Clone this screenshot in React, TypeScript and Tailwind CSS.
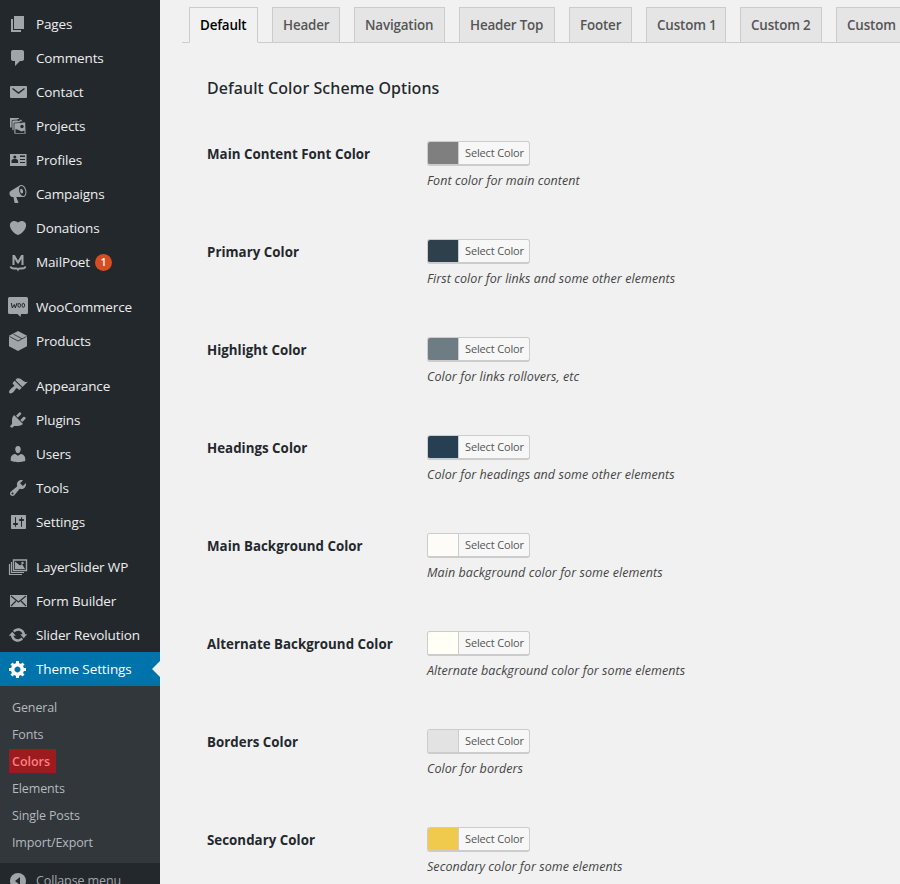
import type { ReactNode } from "react";

const icons: Record<string, ReactNode> = {
  pages: <path d="M6 15V2h10v13H6zm-1 1h8v2H3V5h2v11z" />,
  comments: <path d="M5 2h9c1.1 0 2 .9 2 2v7c0 1.1-.9 2-2 2h-2l-5 5v-5H5c-1.1 0-2-.9-2-2V4c0-1.1.9-2 2-2z" />,
  contact: (
    <>
      <rect x="2" y="4" width="17" height="12" rx="1" />
      <path d="M4.500 6.500l6 4.500 6-4.500" fill="none" stroke="#23282d" strokeWidth="1.500" />
    </>
  ),
  projects: (
    <>
      <path d="M2 2h9v9.500H2z" />
      <path d="M4 4.500l10-1 1 11H4z" stroke="#23282d" strokeWidth=".7" />
      <path d="M6 7l11.500-1L18 18H6z" stroke="#23282d" strokeWidth=".7" />
      <path d="M7.500 13l3 1 3 1.500 3-1V17h-9z" fill="#23282d" />
      <circle cx="14" cy="10.500" r="1.700" fill="#23282d" />
      <circle cx="10.500" cy="4" r="1.100" fill="#23282d" />
      <circle cx="13" cy="6.200" r="1" fill="#23282d" />
    </>
  ),
  profiles: (
    <>
      <rect x="2" y="4" width="16.500" height="12" />
      <g fill="#23282d">
        <circle cx="6.800" cy="7" r="1.500" />
        <path d="M3.500 13v-2c0-1.500 1.500-2 3.300-2s3.300.5 3.300 2v2z" />
        <path d="M12 5.500h5v1.500h-5zM12 9h5v1h-5zM12 12h5v1h-5z" />
      </g>
    </>
  ),
  campaigns: (
    <path d="M18.15 5.94c.46 1.62.38 3.22-.02 4.48-.42 1.28-1.26 2.18-2.3 2.48-.16.06-.26.06-.4.06-.06.02-.12.02-.18.02-.06.02-.14.02-.22.02h-6.8l2.22 5.5c.02.14-.06.26-.14.34-.08.1-.24.16-.34.16H6.95c-.1 0-.26-.06-.34-.16-.08-.08-.16-.2-.14-.34l-1-5.5H4.25l-.02-.02c-.5.06-1.08-.18-1.54-.62s-.88-1.08-1.06-1.88c-.24-.8-.2-1.56-.02-2.2.18-.62.58-1.08 1.06-1.3l.02-.02 9-5.4c.1-.06.18-.1.24-.16.06-.04.14-.08.24-.12.16-.08.28-.12.5-.18 1.04-.3 2.24.1 3.22.98s1.84 2.24 2.26 3.86zm-2.58 5.98h-.02c.4-.1.74-.34 1.04-.7.58-.7.86-1.76.86-3.04 0-.64-.1-1.3-.28-1.98-.34-1.36-1.02-2.5-1.78-3.24s-1.68-1.1-2.46-.88c-.82.22-1.4.96-1.7 2-.32 1.04-.28 2.36.06 3.72.38 1.36 1 2.5 1.8 3.24.78.74 1.62 1.1 2.48.88zm-2.54-7.08c.22-.04.42-.02.62.04.38.16.76.48 1.02 1s.42 1.2.42 1.78c0 .3-.04.56-.12.8-.18.48-.44.84-.86.94-.34.1-.8-.06-1.14-.4s-.64-.86-.78-1.500c-.18-.62-.12-1.24.02-1.72s.48-.84.82-.94z" />
  ),
  donations: (
    <path d="M10 17.12c3.33-1.4 5.74-3.79 7.04-6.21 1.28-2.41 1.46-4.81.32-6.25-1.03-1.29-2.37-1.78-3.73-1.74s-2.68.63-3.63 1.46c-.95-.83-2.27-1.42-3.63-1.46s-2.7.45-3.73 1.74c-1.14 1.44-.96 3.84.34 6.25 1.28 2.42 3.69 4.81 7.02 6.21z" />
  ),
  mailpoet: (
    <>
      <path d="M4.500 13V3h2.300L10 8.500 13.200 3h2.300v10h-2V6.800L10.700 11.500H9.300L6.500 6.800V13z" />
      <path d="M2.500 14.500c.5 1.800 1.800 2 3.500 2h2.500c.8 0 1.200.3 1.500 1 .3-.7.700-1 1.500-1H14c1.700 0 3-.2 3.500-2" fill="none" stroke="currentColor" strokeWidth="1.800" />
    </>
  ),
  woo: (
    <>
      <path d="M1.500 0h17A1.500 1.500 0 0 1 20 1.500v14a1.500 1.500 0 0 1-1.500 1.500H13l-.500 3-3-3h-8A1.500 1.500 0 0 1 0 15.500v-14A1.500 1.500 0 0 1 1.500 0z" />
      <g fill="none" stroke="#23282d" strokeWidth="1">
        <path d="M3.300 6l1 5L6.300 7.500 7.300 11l1.700-5" />
        <ellipse cx="11.200" cy="8.300" rx="1.300" ry="2" />
        <ellipse cx="15.300" cy="8.300" rx="1.300" ry="2" />
      </g>
    </>
  ),
  products: (
    <>
      <path d="M10 0l9 4.700v10.600L10 20l-9-4.700V4.700z" />
      <path d="M1.500 5.500L10 10 18.500 5.500M5.500 3.200L14 7.700" fill="none" stroke="#23282d" strokeWidth=".8" />
    </>
  ),
  appearance: (
    <path d="M14.48 11.06L7.41 3.99l1.5-1.5c.5-.56 2.3-.47 3.51.32 1.21.8 1.43 1.28 2.91 2.1 1.18.64 2.45 1.26 4.45.85zm-.71.71L6.7 4.7 4.93 6.47c-.39.39-.39 1.02 0 1.41l1.06 1.06c.39.39.39 1.03 0 1.42-.6.6-1.43 1.11-2.21 1.69-.35.26-.7.53-1.01.84C1.43 14.23.4 16.08 1.4 17.07c.99 1 2.84-.03 4.18-1.36.31-.31.58-.66.85-1.02.57-.78 1.08-1.61 1.69-2.21.39-.39 1.02-.39 1.41 0l1.06 1.06c.39.39 1.02.39 1.41 0z" />
  ),
  plugins: (
    <path d="M13.11 4.36L9.87 7.6 8 5.73l3.24-3.24c.35-.34 1.05-.2 1.56.32.52.51.66 1.21.31 1.55zm-8 1.77l.91-1.12 9.01 9.01-1.19.84c-.71.71-2.63 1.16-3.82 1.16H6.14L4.9 17.26c-.59.59-1.54.59-2.12 0-.59-.58-.59-1.53 0-2.12l1.24-1.24v-3.88c0-1.13.4-3.19 1.09-3.89zm7.26 3.97l3.24-3.24c.34-.35 1.04-.21 1.55.31.52.51.66 1.21.31 1.55l-3.24 3.25z" />
  ),
  users: (
    <path d="M10 9.25c-2.27 0-2.73-3.44-2.73-3.44C7 4.02 7.82 2 9.97 2c2.16 0 2.98 2.02 2.71 3.81 0 0-.41 3.44-2.68 3.44zm0 2.57L12.72 10c2.39 0 4.52 2.33 4.52 4.53v2.49s-3.65 1.13-7.24 1.13c-3.65 0-7.24-1.13-7.24-1.13v-2.49c0-2.25 1.94-4.48 4.47-4.48z" />
  ),
  tools: (
    <path d="M16.68 9.77c-1.34 1.34-3.3 1.67-4.95.99l-5.41 6.52c-.99.99-2.59.99-3.58 0s-.99-2.59 0-3.57l6.52-5.42c-.68-1.65-.35-3.61.99-4.95 1.28-1.28 3.12-1.62 4.72-1.06l-2.89 2.89 2.82 2.82 2.86-2.87c.53 1.58.18 3.39-1.08 4.65zM3.81 16.21c.4.39 1.04.39 1.43 0 .4-.4.4-1.04 0-1.43-.39-.4-1.03-.4-1.43 0-.39.39-.39 1.03 0 1.43z" />
  ),
  settings: (
    <path d="M18 16V4c0-.55-.45-1-1-1H4c-.55 0-1 .45-1 1v12c0 .55.45 1 1 1h13c.55 0 1-.45 1-1zM8 11h1c.55 0 1 .45 1 1s-.45 1-1 1H8v1.5c0 .28-.22.5-.5.5s-.5-.22-.5-.5V13H6c-.55 0-1-.45-1-1s.45-1 1-1h1V5.500c0-.28.22-.5.5-.5s.5.22.5.5V11zm5-2h-1c-.55 0-1-.45-1-1s.45-1 1-1h1V5.500c0-.28.22-.5.5-.5s.5.22.5.5V7h1c.55 0 1 .45 1 1s-.45 1-1 1h-1v5.500c0 .28-.22.5-.5.5s-.5-.22-.5-.5V9z" />
  ),
  layers: (
    <>
      <path d="M1.500 7v10.500H14M3.500 5v10.500H16" fill="none" stroke="currentColor" strokeWidth="1.200" />
      <path d="M5.500 3h13v10.500h-13z" fill="none" stroke="currentColor" strokeWidth="1.400" />
      <path d="M7 4.500l5 4 2-1.500 3 5H7z" />
      <circle cx="14.500" cy="6" r="1.200" />
    </>
  ),
  form: (
    <>
      <rect x="2" y="4" width="17" height="12" />
      <path d="M3 5l7.500 6L18 5M3 15l5-5M18 15l-5-5" fill="none" stroke="#23282d" strokeWidth="1.100" />
    </>
  ),
  revolution: (
    <path d="M10.2 3.280c3.530 0 6.430 2.610 6.920 6h2.080l-3.500 4-3.500-4h2.320c-.45-1.970-2.210-3.450-4.320-3.450-1.450 0-2.730.71-3.540 1.780L4.950 5.660C6.230 4.200 8.110 3.280 10.200 3.280zm-.4 13.440c-3.520 0-6.430-2.610-6.920-6H.8l3.500-4c1.170 1.330 2.330 2.670 3.500 4H5.480c.45 1.970 2.210 3.450 4.320 3.450 1.450 0 2.730-.71 3.540-1.780l1.710 1.950c-1.280 1.460-3.150 2.380-5.250 2.380z" />
  ),
  theme: (
    <path d="M18 12h-2.18c-.17.7-.44 1.35-.81 1.93l1.54 1.54-2.1 2.1-1.54-1.54c-.58.36-1.23.63-1.91.79V19H8v-2.18c-.68-.16-1.33-.43-1.91-.79l-1.54 1.54-2.12-2.12 1.54-1.54c-.36-.58-.63-1.23-.79-1.91H1V9.030h2.170c.16-.7.44-1.350.8-1.940L2.430 5.550l2.100-2.100 1.540 1.540c.58-.37 1.240-.64 1.930-.81V2h3v2.180c.68.16 1.330.43 1.910.79l1.540-1.540 2.120 2.120-1.540 1.540c.36.59.64 1.240.8 1.940H18V12zm-8.500 1.500c1.660 0 3-1.340 3-3s-1.340-3-3-3-3 1.340-3 3 1.340 3 3 3z" />
  ),
  collapse: (
    <>
      <circle cx="10" cy="10" r="8" />
      <path d="M12 6v8l-5-4z" fill="#23282d" />
    </>
  ),
};

function Icon({ name }: { name: string }) {
  return (
    <svg viewBox="0 0 20 20" width="20" height="20" fill="currentColor" className="shrink-0">
      {icons[name]}
    </svg>
  );
}

const groups: [string, string][][] = [
  [
    ["pages", "Pages"],
    ["comments", "Comments"],
    ["contact", "Contact"],
    ["projects", "Projects"],
    ["profiles", "Profiles"],
    ["campaigns", "Campaigns"],
    ["donations", "Donations"],
    ["mailpoet", "MailPoet"],
  ],
  [
    ["woo", "WooCommerce"],
    ["products", "Products"],
  ],
  [
    ["appearance", "Appearance"],
    ["plugins", "Plugins"],
    ["users", "Users"],
    ["tools", "Tools"],
    ["settings", "Settings"],
  ],
  [
    ["layers", "LayerSlider WP"],
    ["form", "Form Builder"],
    ["revolution", "Slider Revolution"],
    ["theme", "Theme Settings"],
  ],
];

const submenu = ["General", "Fonts", "Colors", "Elements", "Single Posts", "Import/Export"];

const tabs: [string, string][] = [
  ["Default", "w-[69px]"],
  ["Header", "w-[68px]"],
  ["Navigation", "w-[91px]"],
  ["Header Top", "w-[96px]"],
  ["Footer", "w-[63px]"],
  ["Custom 1", "w-[80px]"],
  ["Custom 2", "w-[82px]"],
  ["Custom", "w-[82px]"],
];

const options: [string, string, string][] = [
  ["Main Content Font Color", "bg-[#7f7f7f]", "Font color for main content"],
  ["Primary Color", "bg-[#2f404d]", "First color for links and some other elements"],
  ["Highlight Color", "bg-[#6e7c83]", "Color for links rollovers, etc"],
  ["Headings Color", "bg-[#263f52]", "Color for headings and some other elements"],
  ["Main Background Color", "bg-[#fdfcf8]", "Main background color for some elements"],
  ["Alternate Background Color", "bg-[#fffff6]", "Alternate background color for some elements"],
  ["Borders Color", "bg-[#e3e3e3]", "Color for borders"],
  ["Secondary Color", "bg-[#f0ca4d]", "Secondary color for some elements"],
];

function MenuItem({ icon, label }: { icon: string; label: string }) {
  const active = icon === "theme";
  return (
    <a
      className={
        active
          ? "relative flex h-[34px] items-center gap-2 bg-[#0073aa] pl-2 text-white"
          : "flex h-[34px] items-center gap-2 pl-2 text-[#a0a5aa]"
      }
    >
      <Icon name={icon} />
      <span
        className={
          active
            ? "pt-[2px] text-[13.5px] tracking-[-0.09px] text-white"
            : "pt-[2px] text-[13.5px] tracking-[-0.14px] text-[#eeeeee]"
        }
      >
        {label}
      </span>
      {icon === "mailpoet" && (
        <span className="-ml-[3px] flex h-[17px] w-[17px] items-center justify-center rounded-full bg-[#d54e21] text-[10px] font-semibold text-white">
          1
        </span>
      )}
      {active && (
        <span className="absolute top-[9px] right-0 border-y-8 border-r-8 border-y-transparent border-r-[#f1f1f1]" />
      )}
    </a>
  );
}

export default function App() {
  return (
    <div className="flex h-[884px] w-[900px] overflow-hidden bg-[#f1f1f1] font-['Open_Sans','Noto_Sans',sans-serif] leading-none">
      <aside className="w-[160px] shrink-0 bg-[#23282d] pt-[7px]">
        <nav className="flex flex-col gap-[11px]">
          {groups.map((group, i) => (
            <div key={i}>
              {group.map(([icon, label]) => (
                <MenuItem key={label} icon={icon} label={label} />
              ))}
            </div>
          ))}
        </nav>
        <ul className="bg-[#32373c] pt-2 pb-[7px] text-[12.5px] tracking-[-0.13px] text-[#b4b9be]">
          {submenu.map((s) => (
            <li key={s} className="flex h-[27px] items-start pt-px pl-[9px]">
              <span
                className={
                  s === "Colors"
                    ? "flex h-6 w-[47px] items-center bg-[#9b1b1f] pt-[3px] pl-[3px] font-semibold tracking-[-0.03px] text-[#ff7f80]"
                    : "flex h-6 items-center pt-[3px] pl-[3px]"
                }
              >
                {s}
              </span>
            </li>
          ))}
        </ul>
        <div className="flex h-[35px] items-center gap-2 pl-2 text-[12.5px] tracking-[-0.11px] text-[#a0a5aa]">
          <Icon name="collapse" />
          <span className="pt-[2px]">Collapse menu</span>
        </div>
      </aside>
      <main className="min-w-0 flex-1">
        <div className="ml-[22px] flex h-[43px] items-end gap-[14px] overflow-hidden pt-[7px] pl-[7px] shadow-[inset_0_-1px_0_#cccccc]">
          {tabs.map(([t, w], i) => (
            <a
              key={t}
              className={
                (i === 0
                  ? "border-b-[#f1f1f1] bg-[#f1f1f1] text-black "
                  : "border-b-[#cccccc] bg-[#e5e5e5] text-[#555555] ") +
                "flex h-9 shrink-0 items-center border border-[#cccccc] pt-[2px] pl-[10px] text-[13.4px] font-semibold tracking-[-0.17px] whitespace-nowrap " +
                w
              }
            >
              {t}
            </a>
          ))}
        </div>
        <div className="pl-[47px]">
          <h2 className="mt-[35px] font-['Noto_Sans',sans-serif] text-[16px] leading-[20px] font-medium tracking-[0.08px] text-[#23282d]">
            Default Color Scheme Options
          </h2>
          <div className="pt-[43px]">
            {options.map(([label, color, desc]) => (
              <div key={label} className="flex h-[98px]">
                <div className="w-[220px] pt-[4px] text-[13.3px] leading-[18px] font-bold tracking-[0.03px] text-[#23282d]">
                  {label}
                </div>
                <div>
                  <div className="flex h-[25px] w-[103px] overflow-hidden rounded-[3px] border border-b-2 border-[#cccccc] bg-[#f7f7f7]">
                    <span className={"w-[30px] " + color} />
                    <span className="flex flex-1 items-center border-l border-[#cccccc] pb-px pl-[6px] text-[11px] tracking-[-0.15px] text-[#555555]">
                      Select Color
                    </span>
                  </div>
                  <p className="mt-[6px] text-[12.5px] leading-[18px] tracking-[0.07px] text-[#444444] italic">{desc}</p>
                </div>
              </div>
            ))}
          </div>
        </div>
      </main>
    </div>
  );
}
